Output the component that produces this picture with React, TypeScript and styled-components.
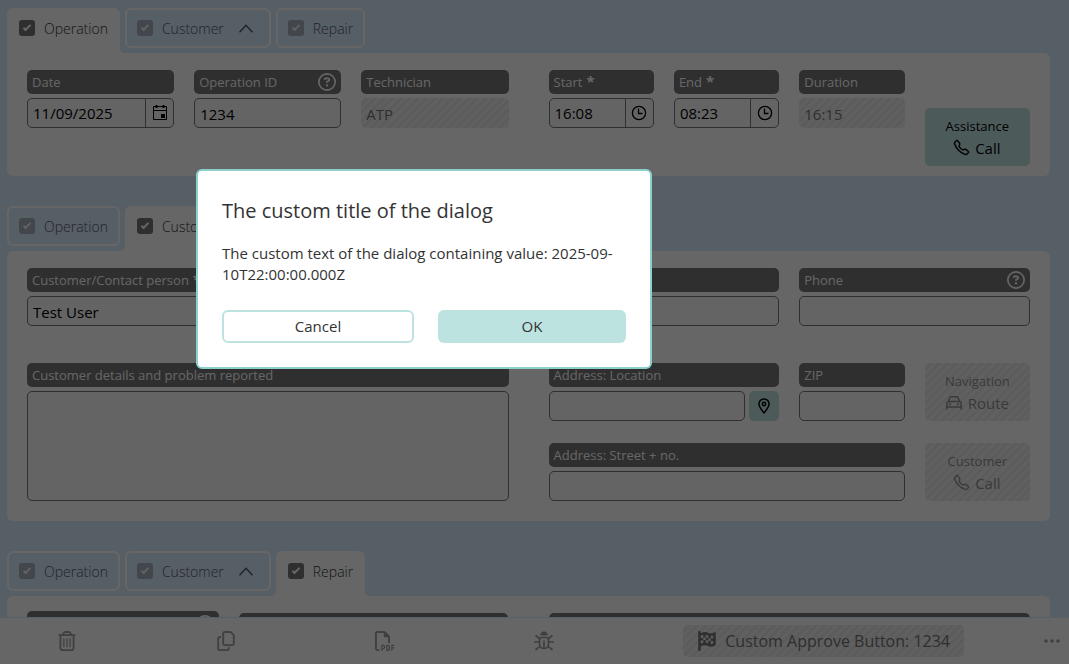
import React from "react";
import styled, { createGlobalStyle, css } from "styled-components";
import { FaRegTrashCan, FaRegCopy, FaRegFilePdf, FaFlagCheckered, FaRegCircleQuestion } from "react-icons/fa6";
import { BsTelephone } from "react-icons/bs";

const GlobalStyle = createGlobalStyle`
  *, *::before, *::after { box-sizing: border-box; }
  html, body { margin: 0; height: 100%; }
  body, button, input, textarea { font-family: "Open Sans", "Noto Sans", sans-serif; }
  button { cursor: pointer; }
`;

const INK = "#757575";
const MINT = "#bde3e0";
const SKY = "#d7ebff";

const hatch = css`
  background: repeating-linear-gradient(135deg, #f0f0f0 0 3px, #e6e6e6 3px 6px);
`;

const Shell = styled.div`
  display: flex;
  flex-direction: column;
  height: 100vh;
  background: ${SKY};
  color: #333;
`;

const Main = styled.main`
  flex: 1;
  min-height: 0;
  overflow-y: auto;
  scrollbar-width: none;
  padding: 8px 19px 0 7px;
  display: flex;
  flex-direction: column;
  gap: 30px;
`;

const Section = styled.section`
  flex: none;
`;

const Tabs = styled.div`
  display: flex;
  gap: 5px;
  height: 45px;
`;

const Tab = styled.div<{ $active: boolean; $first: boolean }>`
  position: relative;
  display: flex;
  align-items: center;
  height: 40px;
  padding: 0 10px;
  border: 2px solid #fff;
  border-radius: 6px;
  font-weight: 300;
  font-size: 14px;
  color: #333;
  ${(p) =>
    p.$active
      ? css`
          height: 45px;
          padding-bottom: 7px;
          background: #fff;
          border-bottom: 0;
          border-radius: 6px 6px 0 0;
          &::after {
            content: "";
            position: absolute;
            left: 100%;
            bottom: 0;
            width: 5px;
            height: 5px;
            margin-left: 2px;
            background: radial-gradient(circle at 100% 0, transparent 5px, #fff 5px);
          }
          &::before {
            content: "";
            display: ${p.$first ? "none" : "block"};
            position: absolute;
            right: 100%;
            bottom: 0;
            width: 5px;
            height: 5px;
            margin-right: 2px;
            background: radial-gradient(circle at 0 0, transparent 5px, #fff 5px);
          }
        `
      : css`
          & > * { opacity: 0.8; }
          & input { opacity: 0.6; }
        `}
`;

const TabLabel = styled.label`
  display: flex;
  align-items: center;
  gap: 9px;
`;

const Check = styled.input`
  appearance: none;
  position: relative;
  width: 16px;
  height: 16px;
  margin: 0;
  border-radius: 3px;
  background: ${INK};
  &:checked::after {
    content: "";
    position: absolute;
    left: 6px;
    top: 3px;
    width: 4px;
    height: 8px;
    border: solid #fff;
    border-width: 0 2px 2px 0;
    transform: rotate(45deg);
  }
`;

const Fold = styled.button`
  display: flex;
  margin: 0 6px 0 15px;
  padding: 0;
  border: 0;
  background: none;
  color: #333;
`;

const Panel = styled.div<{ $top?: number; $bottom?: number; $square?: boolean }>`
  display: grid;
  grid-template-columns: minmax(0, 1fr) minmax(0, 1fr);
  column-gap: 40px;
  padding: ${(p) => p.$top ?? 17}px 20px ${(p) => p.$bottom ?? 20}px;
  background: #fff;
  border-radius: ${(p) => (p.$square ? "0" : "6px")} 6px 6px 6px;
`;

const Cols = styled.div<{ $template: string; $end?: boolean }>`
  display: grid;
  grid-template-columns: ${(p) => p.$template};
  column-gap: 20px;
  row-gap: 22px;
  align-content: ${(p) => (p.$end ? "end" : "start")};
  align-items: ${(p) => (p.$end ? "end" : "stretch")};
`;

const Gap = styled.div`
  grid-column: 1 / -1;
  height: 37px;
`;

const Field = styled.div<{ $span?: number }>`
  grid-column: span ${(p) => p.$span ?? 1};
  display: flex;
  flex-direction: column;
  gap: 4px;
  min-width: 0;
`;

const Caption = styled.div<{ $tall?: boolean }>`
  display: flex;
  align-items: center;
  justify-content: space-between;
  height: ${(p) => (p.$tall ? 26 : 24)}px;
  padding: 0 5px;
  border-radius: 5px;
  background: ${INK};
  color: #fff;
  font-size: 13px;
  line-height: 24px;
  white-space: nowrap;
`;

const Star = styled.span`
  margin-left: 4px;
  font-size: 15px;
  line-height: 16px;
  font-weight: 700;
`;

const Help = styled.button`
  display: flex;
  padding: 0;
  border: 0;
  background: none;
  color: #fff;
  font-size: 18px;
`;

const box = css`
  border: 1px solid ${INK};
  border-radius: 5px;
  background: #f9f9f9;
`;

const Row = styled.div`
  display: flex;
  gap: 4px;
`;

const Input = styled.input`
  ${box}
  flex: 1;
  width: 100%;
  min-width: 0;
  height: 30px;
  padding: 2px 5px 0;
  font-size: 15px;
  color: #000;
  &:disabled {
    ${hatch}
    border-color: transparent;
    background-origin: border-box;
    padding-left: 4px;
    color: #777;
  }
`;

const Combo = styled.div`
  ${box}
  display: flex;
  height: 30px;
  overflow: hidden;
`;

const ComboInput = styled.input`
  flex: 1;
  min-width: 0;
  padding: 0 5px;
  border: 0;
  background: none;
  font-size: 15px;
  color: #000;
`;

const ComboButton = styled.button`
  display: flex;
  align-items: center;
  justify-content: center;
  width: 28px;
  padding: 0;
  border: 0;
  border-left: 1px solid ${INK};
  background: none;
  color: #000;
`;

const Area = styled.textarea`
  ${box}
  flex: 1;
  min-height: 110px;
  padding: 5px;
  resize: none;
  font-size: 15px;
`;

const PinButton = styled.button`
  display: flex;
  align-items: center;
  justify-content: center;
  width: 30px;
  height: 30px;
  padding: 0;
  border: 0;
  border-radius: 5px;
  background: ${MINT};
  color: #000;
`;

const Action = styled.button<{ $low?: boolean }>`
  display: flex;
  flex-direction: column;
  align-items: center;
  justify-content: center;
  gap: 1px;
  height: 58px;
  margin-top: ${(p) => (p.$low ? 38 : 0)}px;
  padding: 0;
  border: 0;
  border-radius: 5px;
  background: ${MINT};
  color: #000;
  font-size: 13px;
  line-height: 20px;
  &:disabled {
    ${hatch}
    color: #909090;
  }
`;

const ActionMain = styled.span`
  display: flex;
  align-items: center;
  gap: 6px;
  font-size: 15px;
  line-height: 22px;
`;

const PhoneIcon = styled(BsTelephone)`
  stroke: currentColor;
  stroke-width: 0.5px;
  overflow: visible;
`;

const Bar = styled.footer`
  flex: none;
  display: flex;
  align-items: center;
  height: 47px;
  border-top: 1px solid ${SKY};
  background: #fff;
`;

const BarActions = styled.div`
  flex: 1;
  display: flex;
  align-items: center;
  justify-content: space-between;
  padding: 0 70px 0 47px;
`;

const BarIcon = styled.button<{ $w: number }>`
  display: flex;
  align-items: center;
  justify-content: center;
  width: ${(p) => p.$w}px;
  height: 32px;
  padding: 0;
  border: 0;
  background: none;
  color: #a0a0a0;
  font-size: 20px;
`;

const Approve = styled.button`
  ${hatch}
  display: flex;
  align-items: center;
  gap: 8px;
  height: 32px;
  padding: 0 14px;
  border: 0;
  border-radius: 5px;
  color: #757575;
  font-size: 16px;
  white-space: nowrap;
`;

const Backdrop = styled.div`
  position: fixed;
  inset: 0;
  display: flex;
  align-items: flex-start;
  padding: 169px 0 0 196px;
  background: rgba(0, 0, 0, 0.6);
`;

const Dialog = styled.div`
  width: 456px;
  padding: 24px;
  border: 2px solid #8ccfcb;
  border-radius: 6px;
  background: #fff;
  color: #333;
`;

const DialogTitle = styled.h2`
  margin: 0 0 16px;
  font-size: 20px;
  line-height: 32px;
  font-weight: 400;
`;

const DialogText = styled.p`
  margin: 0 0 25px;
  font-size: 15px;
  line-height: 21px;
`;

const DialogButtons = styled.div`
  display: flex;
  gap: 24px;
`;

const DialogButton = styled.button<{ $primary?: boolean }>`
  flex: 1;
  height: 33px;
  padding: 0 0 2px;
  border: ${(p) => (p.$primary ? "0" : `2px solid ${MINT}`)};
  border-radius: 6px;
  background: ${(p) => (p.$primary ? MINT : "#fff")};
  color: #333;
  font-size: 15px;
`;

const ChevronUp = () => (
  <svg width="14" height="9" viewBox="0 0 14 9" fill="none" stroke="currentColor" strokeWidth="1.4">
    <path d="M0.5 8.2 7 1.2l6.5 7" />
  </svg>
);

const CalendarIcon = () => (
  <svg width="16" height="16" viewBox="0 0 16 16" fill="none" stroke="currentColor">
    <path d="M1.5 1.5h13v13h-13zM1.5 5.5h13" />
    <path d="M4.5 0v3M11.5 0v3" strokeWidth="2" />
    <path d="M9 9h4v4H9z" fill="currentColor" stroke="none" />
  </svg>
);

const ClockIcon = () => (
  <svg width="16" height="16" viewBox="0 0 16 16" fill="none" stroke="currentColor" strokeWidth="1.3">
    <circle cx="8" cy="8" r="6.6" />
    <path d="M7.5 3.5v5h4" />
  </svg>
);

const PinIcon = () => (
  <svg width="12" height="16" viewBox="0 0 12 16" fill="none" stroke="currentColor" strokeWidth="1.5">
    <path d="M6 15C4.6 13.2 .9 8.8 .9 6A5.1 5.1 0 0 1 11.1 6C11.1 8.8 7.4 13.2 6 15z" strokeLinejoin="round" />
    <circle cx="6" cy="6" r="1.7" />
  </svg>
);

const CarIcon = () => (
  <svg width="16" height="14" viewBox="0 0 16 14" fill="none" stroke="currentColor" strokeWidth="1.5" strokeLinecap="round" strokeLinejoin="round">
    <path d="M.8 13V7.5A2 2 0 0 1 2.8 5.5H13.2A2 2 0 0 1 15.2 7.5V13M.8 11H15.2" />
    <path d="M2.5 5.5 3.8 1.9A1.7 1.7 0 0 1 5.4.8H10.6A1.7 1.7 0 0 1 12.2 1.9L13.5 5.5" />
    <path d="M3.8 8.3h.6M11.6 8.3h.6" strokeWidth="1.7" />
  </svg>
);

const BugIcon = () => (
  <svg width="20" height="20" viewBox="0 0 20 20" fill="none" stroke="currentColor" strokeWidth="1.7" strokeLinecap="round">
    <path d="M6.4 4.6V4a3.6 3.6 0 0 1 7.2 0v.6z" fill="currentColor" stroke="none" />
    <path d="M5.5 8.5a2 2 0 0 1 2-2h5a2 2 0 0 1 2 2V13a4.5 4.5 0 0 1-9 0z" />
    <path d="M10 10v7M.9 11h4M15.1 11h4M2 4.7l3.7 2.8M18 4.7l-3.7 2.8M2 18.5l3.9-3.2M18 18.5l-3.9-3.2" />
  </svg>
);

const DotsIcon = () => (
  <svg width="16" height="4" viewBox="0 0 16 4" fill="currentColor">
    <circle cx="2" cy="2" r="1.8" />
    <circle cx="8" cy="2" r="1.8" />
    <circle cx="14" cy="2" r="1.8" />
  </svg>
);

type CapProps = { id?: string; text?: string; required?: boolean; help?: boolean; tall?: boolean };

const Cap = ({ id, text, required, help, tall }: CapProps) => (
  <Caption $tall={tall}>
    <label htmlFor={id}>
      {text}
      {required && <Star>*</Star>}
    </label>
    {help && (
      <Help type="button" aria-label="Help">
        <FaRegCircleQuestion />
      </Help>
    )}
  </Caption>
);

type TextFieldProps = CapProps & { id: string; span?: number; value?: string; disabled?: boolean; children?: React.ReactNode };

const TextField = ({ id, span, value = "", disabled, children, ...cap }: TextFieldProps) => (
  <Field $span={span}>
    <Cap id={id} {...cap} />
    <Row>
      <Input id={id} defaultValue={value} disabled={disabled} />
      {children}
    </Row>
  </Field>
);

const PickerField = ({ id, value, kind, ...cap }: CapProps & { id: string; value: string; kind: "date" | "time" }) => (
  <Field>
    <Cap id={id} {...cap} />
    <Combo>
      <ComboInput id={id} defaultValue={value} />
      <ComboButton type="button" aria-label={`Pick ${kind}`}>
        {kind === "date" ? <CalendarIcon /> : <ClockIcon />}
      </ComboButton>
    </Combo>
  </Field>
);

const ONE = "minmax(0, 1fr)";
const THREE = "repeat(3, minmax(0, 1fr))";
const FOUR = "repeat(4, minmax(0, 1fr))";
const FIVE_SEVEN = "minmax(0, 5fr) minmax(0, 7fr)";

const TAB_NAMES = ["Operation", "Customer", "Repair"];

const TabBar = ({ active }: { active: number }) => (
  <Tabs>
    {TAB_NAMES.map((name, i) => (
      <Tab key={name} $active={i === active} $first={i === 0}>
        <TabLabel>
          <Check type="checkbox" defaultChecked />
          {name}
        </TabLabel>
        {name === "Customer" && (
          <Fold type="button" aria-label="Collapse">
            <ChevronUp />
          </Fold>
        )}
      </Tab>
    ))}
  </Tabs>
);

export default function App() {
  return (
    <>
      <GlobalStyle />
      <Shell>
        <Main>
          <Section>
            <TabBar active={0} />
            <Panel $bottom={10} $square>
              <Cols $template={THREE}>
                <PickerField id="date" text="Date" value="11/09/2025" kind="date" />
                <TextField id="operation-id" text="Operation ID" value="1234" help />
                <TextField id="technician" text="Technician" value="ATP" disabled />
              </Cols>
              <Cols $template={FOUR}>
                <PickerField id="start" text="Start" value="16:08" kind="time" required />
                <PickerField id="end" text="End" value="08:23" kind="time" required />
                <TextField id="duration" text="Duration" value="16:15" disabled />
                <Action type="button" $low>
                  Assistance
                  <ActionMain>
                    <PhoneIcon /> Call
                  </ActionMain>
                </Action>
              </Cols>
            </Panel>
          </Section>

          <Section>
            <TabBar active={1} />
            <Panel>
              <Cols $template={ONE}>
                <TextField id="contact" text="Customer/Contact person" value="Test User" required />
              </Cols>
              <Cols $template={FOUR}>
                <TextField id="contact-extra" span={2} />
                <TextField id="phone" text="Phone" span={2} help />
              </Cols>
              <Gap />
              <Field>
                <Cap id="details" text="Customer details and problem reported" />
                <Area id="details" />
              </Field>
              <Cols $template={FOUR}>
                <TextField id="location" text="Address: Location" span={2}>
                  <PinButton type="button" aria-label="Use current location">
                    <PinIcon />
                  </PinButton>
                </TextField>
                <TextField id="zip" text="ZIP" />
                <Action type="button" disabled>
                  Navigation
                  <ActionMain>
                    <CarIcon /> Route
                  </ActionMain>
                </Action>
                <TextField id="street" text="Address: Street + no." span={3} />
                <Action type="button" disabled>
                  Customer
                  <ActionMain>
                    <PhoneIcon /> Call
                  </ActionMain>
                </Action>
              </Cols>
            </Panel>
          </Section>

          <Section>
            <TabBar active={2} />
            <Panel $top={15}>
              <Cols $template={FIVE_SEVEN} $end>
                <TextField id="repair-kind" help tall />
                <TextField id="repair-cause" />
              </Cols>
              <Cols $template={ONE} $end>
                <TextField id="repair-work" />
              </Cols>
            </Panel>
          </Section>
        </Main>

        <Bar>
          <BarActions>
            <BarIcon type="button" $w={40} aria-label="Delete">
              <FaRegTrashCan />
            </BarIcon>
            <BarIcon type="button" $w={40} aria-label="Copy">
              <FaRegCopy />
            </BarIcon>
            <BarIcon type="button" $w={40} aria-label="Export PDF">
              <FaRegFilePdf />
            </BarIcon>
            <BarIcon type="button" $w={40} aria-label="Report a bug">
              <BugIcon />
            </BarIcon>
            <Approve type="button">
              <FaFlagCheckered size={20} /> Custom Approve Button: 1234
            </Approve>
          </BarActions>
          <BarIcon type="button" $w={35} aria-label="More">
            <DotsIcon />
          </BarIcon>
        </Bar>
      </Shell>

      <Backdrop>
        <Dialog role="dialog" aria-modal="true" aria-labelledby="dialog-title">
          <DialogTitle id="dialog-title">The custom title of the dialog</DialogTitle>
          <DialogText>The custom text of the dialog containing value: 2025-09-10T22:00:00.000Z</DialogText>
          <DialogButtons>
            <DialogButton type="button">Cancel</DialogButton>
            <DialogButton type="button" $primary>
              OK
            </DialogButton>
          </DialogButtons>
        </Dialog>
      </Backdrop>
    </>
  );
}
